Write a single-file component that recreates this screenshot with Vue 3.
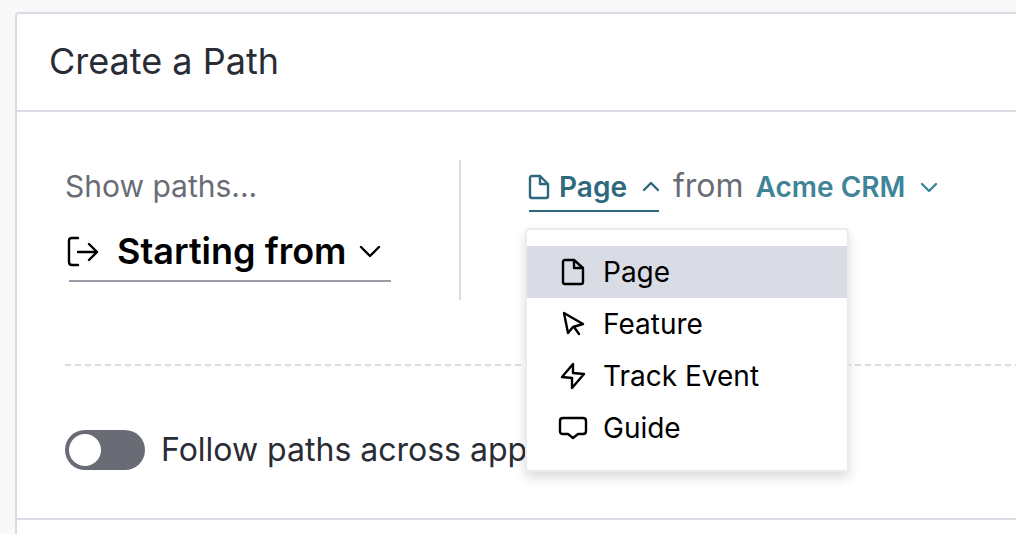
<template>
  <main class="page">
    <section class="card">
      <header class="card-header">
        <h1 class="card-title">Create a Path</h1>
      </header>

      <div class="card-body">
        <div class="builder">
          <div class="builder-start">
            <span id="direction-label" class="hint">Show paths...</span>
            <button class="direction" type="button" aria-labelledby="direction-label direction-value">
              <svg class="direction-icon" viewBox="0 0 32 32" aria-hidden="true">
                <path d="M11 3H5Q2 3 2 6V27Q2 30 5 30H11M11 17H30M22 9L30 17L22 25" />
              </svg>
              <span id="direction-value">Starting from</span>
              <svg class="chevron chevron-lg" viewBox="0 0 20 12" aria-hidden="true">
                <path d="M1 2L10 11L19 2" />
              </svg>
            </button>
          </div>

          <div class="builder-target">
            <div class="picker">
              <button
                class="picker-button open"
                type="button"
                aria-haspopup="menu"
                :aria-expanded="isOpen"
                @click="isOpen = !isOpen"
              >
                <svg class="picker-icon" viewBox="0 0 20 24" aria-hidden="true">
                  <path d="M11 1H3Q1 1 1 3V21Q1 23 3 23H17Q19 23 19 21V9ZM11 1V9H19" />
                </svg>
                <span>{{ selected }}</span>
                <svg class="chevron" viewBox="0 0 16 10" aria-hidden="true">
                  <path d="M1 8L8 1L15 8" />
                </svg>
              </button>

              <div v-if="isOpen" class="menu" role="menu">
                <button
                  v-for="item in items"
                  :key="item.label"
                  class="menu-item"
                  :class="{ active: item.label === selected }"
                  type="button"
                  role="menuitem"
                  @click="selected = item.label"
                >
                  <svg class="menu-icon" viewBox="0 0 28 28" aria-hidden="true">
                    <path :d="item.icon" />
                  </svg>
                  <span>{{ item.label }}</span>
                </button>
              </div>
            </div>
            <span class="joiner">from</span>
            <button class="picker-button" type="button">
              <span>Acme CRM</span>
              <svg class="chevron" viewBox="0 0 16 10" aria-hidden="true">
                <path d="M1 2L8 9L15 2" />
              </svg>
            </button>
          </div>
        </div>

        <div class="separator"></div>

        <div class="follow">
          <input id="follow" v-model="followApps" class="toggle" type="checkbox" />
          <label for="follow">Follow paths across app</label>
        </div>
      </div>
    </section>
  </main>
</template>

<script setup>
import { ref } from 'vue'

const isOpen = ref(true)
const selected = ref('Page')
const followApps = ref(false)

const items = [
  { label: 'Page', icon: 'M15 2H6Q4 2 4 4V24Q4 26 6 26H22Q24 26 24 24V10ZM15 2V10H24' },
  { label: 'Feature', icon: 'M5 3L9 23L14 17L24 14ZM15 17L20 24' },
  { label: 'Track Event', icon: 'M14 2L3 15L13 16V26L25 12L14 11Z' },
  { label: 'Guide', icon: 'M4 4H24Q27 4 27 7V17Q27 20 24 20H19L14 24L9 20H4Q1 20 1 17V7Q1 4 4 4Z' }
]
</script>

<style>
body {
  background: #f8f8f8;
}
</style>

<style scoped>
.page {
  display: flex;
  min-height: 100vh;
  box-sizing: border-box;
  padding: 12px 0 0 15px;
  overflow: hidden;
  font-family: Inter, 'Liberation Sans', sans-serif;
  color: #2a2c35;
}

.card {
  flex: 1;
  min-width: 0;
  background: #fff;
  border: 2px solid #dadce5;
  border-right: 0;
  border-bottom: 0;
  border-radius: 4px 0 0 0;
}

.card-header {
  padding: 23px 32px 25px;
  border-bottom: 2px solid #dadce5;
}

.card-title {
  margin: 0;
  font-size: 36px;
  font-weight: 400;
  line-height: 48px;
}

.card-body {
  padding: 48px 0 0 48px;
  border-bottom: 2px solid #dadce5;
}

button {
  display: flex;
  align-items: center;
  padding: 0;
  border: 0;
  background: none;
  font-family: inherit;
  cursor: pointer;
}

svg {
  flex: none;
  fill: none;
  stroke: currentColor;
  stroke-width: 2.4;
  stroke-linecap: round;
  stroke-linejoin: round;
  overflow: visible;
}

.builder {
  display: flex;
}

.builder-start {
  display: flex;
  flex: none;
  flex-direction: column;
  gap: 10px;
  width: 326px;
  padding: 0 68px 18px 0;
  border-right: 2px solid #dadce5;
}

.hint,
.joiner {
  line-height: 52px;
  color: #6a6c75;
}

.hint {
  font-size: 30px;
}

.joiner {
  margin: 0 12px 0 14px;
  font-size: 32px;
}

.direction {
  height: 60px;
  margin-left: 4px;
  border-bottom: 2px solid #9a9ca5;
  font-size: 36px;
  font-weight: 600;
  color: #000;
  white-space: nowrap;
}

.direction-icon {
  width: 32px;
  height: 32px;
  margin: 0 18px 0 -2px;
}

.chevron {
  width: 16px;
  height: 10px;
}

.chevron-lg {
  width: 20px;
  height: 12px;
  margin-left: 14px;
}

.builder-target {
  display: flex;
  align-items: flex-start;
  padding-left: 68px;
}

.picker {
  position: relative;
}

.picker-button {
  gap: 16px;
  height: 52px;
  padding-top: 4px;
  border-bottom: 2px solid transparent;
  font-size: 28px;
  font-weight: 600;
  color: #3f8497;
  white-space: nowrap;
}

.picker-button.open {
  border-bottom-color: #2d687d;
  color: #2d687d;
}

.picker-icon {
  width: 20px;
  height: 24px;
  margin-right: -6px;
}

.menu {
  position: absolute;
  top: 68px;
  left: -4px;
  z-index: 1;
  width: 320px;
  padding: 16px 0;
  background: #fff;
  border: 2px solid #eaebf1;
  border-radius: 4px;
  box-shadow: 0 6px 12px rgba(0, 0, 0, 0.14);
}

.menu-item {
  gap: 16px;
  width: 100%;
  height: 52px;
  padding: 0 32px;
  font-size: 28px;
  color: #000;
}

.menu-item.active {
  background: #dadce5;
}

.menu-icon {
  width: 28px;
  height: 28px;
}

.separator {
  height: 2px;
  margin-top: 64px;
  background: repeating-linear-gradient(90deg, #dadce5 0 6px, transparent 6px 10px);
}

.follow {
  display: flex;
  align-items: center;
  gap: 16px;
  padding: 64px 0 48px;
  font-size: 32px;
  line-height: 40px;
}

.toggle {
  appearance: none;
  display: flex;
  width: 80px;
  height: 40px;
  margin: 0;
  padding: 4px;
  box-sizing: border-box;
  border-radius: 20px;
  background: #6a6c75;
  cursor: pointer;
}

.toggle::before {
  content: '';
  width: 32px;
  height: 32px;
  border-radius: 50%;
  background: #fff;
}

.toggle:checked {
  justify-content: flex-end;
  background: #2d687d;
}
</style>
